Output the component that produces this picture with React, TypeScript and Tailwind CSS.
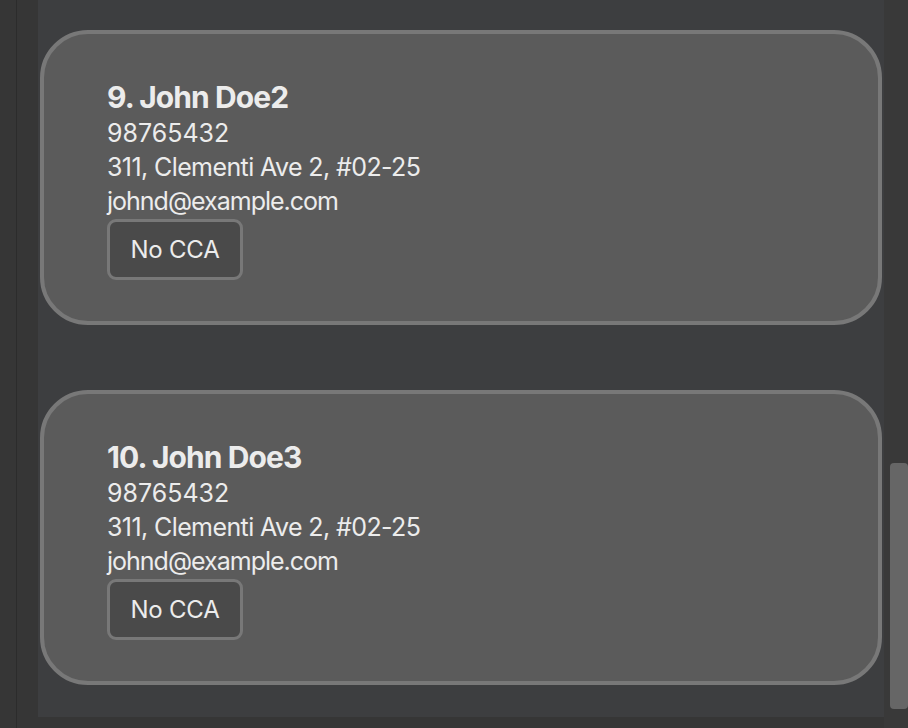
const persons = [
  { idx: 9, name: "John Doe2" },
  { idx: 10, name: "John Doe3" },
];

function PersonCard({ idx, name }: { idx: number; name: string }) {
  return (
    <div className="h-[295px] shrink-0 rounded-[48px] border-4 border-[#787878] bg-[#5b5b5b] pl-[63px] pt-[45px] text-[#ececec]">
      <div className="text-[30px] font-bold leading-[36px] tracking-[-0.9px]">
        {idx}. {name}
      </div>
      <div className="mt-[1px] flex flex-col text-[25px] leading-[34px]">
        <span>98765432</span>
        <span className="tracking-[-0.6px]">311, Clementi Ave 2, #02-25</span>
        <span className="tracking-[-1px]">johnd@example.com</span>
      </div>
      <div className="mt-[1px] flex">
        <span className="flex h-[61px] w-[136px] items-center justify-center rounded-[9px] border-[3px] border-[#787878] bg-[#4a4a4a] text-[24px] tracking-[-0.2px]">
          No CCA
        </span>
      </div>
    </div>
  );
}

export default function App() {
  return (
    <div
      className="flex h-[728px] w-[908px] overflow-hidden bg-[#363636]"
      style={{ fontFamily: "Inter, 'Noto Sans', sans-serif" }}
    >
      <div className="w-[16px] shrink-0" />
      <div className="w-[1px] shrink-0 bg-[#2c2c2c]" />
      <div className="w-[21px] shrink-0" />
      <div className="flex h-[717px] w-[846px] shrink-0 flex-col gap-[65px] bg-[#3d3e40] px-[2px] pt-[30px]">
        {persons.map((p) => (
          <PersonCard key={p.idx} {...p} />
        ))}
      </div>
      <div className="flex w-[24px] shrink-0 flex-col bg-[#393939] pl-[6px]">
        <div className="mt-[463px] h-[246px] w-[18px] rounded-[4px] bg-[#666666]" />
      </div>
    </div>
  );
}
